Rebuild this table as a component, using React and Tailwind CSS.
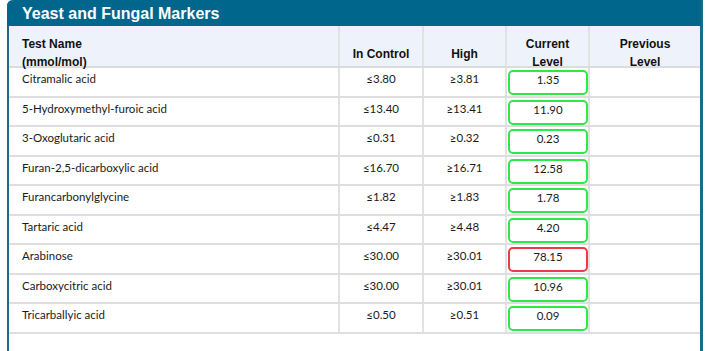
import React from "react";

const rows = [
  ["Citramalic acid", "≤3.80", "≥3.81", "1.35", false],
  ["5-Hydroxymethyl-furoic acid", "≤13.40", "≥13.41", "11.90", false],
  ["3-Oxoglutaric acid", "≤0.31", "≥0.32", "0.23", false],
  ["Furan-2,5-dicarboxylic acid", "≤16.70", "≥16.71", "12.58", false],
  ["Furancarbonylglycine", "≤1.82", "≥1.83", "1.78", false],
  ["Tartaric acid", "≤4.47", "≥4.48", "4.20", false],
  ["Arabinose", "≤30.00", "≥30.01", "78.15", true],
  ["Carboxycitric acid", "≤30.00", "≥30.01", "10.96", false],
  ["Tricarballyic acid", "≤0.50", "≥0.51", "0.09", false],
];

export default function App() {
  return (
    <div className="w-[707px] h-[351px] bg-white overflow-hidden">
      <div className="ml-[7px] w-[696px] h-[360px] border-l-2 border-r-[3px] border-[#1a6a8a] rounded-tl-[6px] flex flex-col">
        <div className="-ml-[2px] w-[694px] h-[26px] bg-[#00668b] rounded-tl-[6px] shrink-0 flex items-center pl-[15px] pt-[1px]">
          <span className="text-white font-bold text-[16px] leading-none font-['Liberation_Sans',Arial,sans-serif]">
            Yeast and Fungal Markers
          </span>
        </div>
        <div className="w-[691px] flex flex-col">
          <div className="h-[42px] bg-[#eef3fb] flex border-b-2 border-[#dcdcdc] font-['Liberation_Sans',Arial,sans-serif] font-bold text-[12px] leading-[18px] text-[#111]">
            <div className="w-[331px] border-r-2 border-[#e2e2e2] pl-[13px] pt-[9px]">
              <div>Test Name</div>
              <div>(mmol/mol)</div>
            </div>
            <div className="w-[84px] border-r-2 border-[#e2e2e2] flex items-center justify-center pt-[15px]">In Control</div>
            <div className="w-[83px] border-r-2 border-[#e2e2e2] flex items-center justify-center pt-[15px]">High</div>
            <div className="w-[83px] border-r-2 border-[#e2e2e2] text-center pt-[9px]">
              <div>Current</div>
              <div>Level</div>
            </div>
            <div className="w-[110px] text-center pt-[9px]">
              <div>Previous</div>
              <div>Level</div>
            </div>
          </div>
          {rows.map(([name, ctl, high, cur, bad], i) => (
            <div
              key={i}
              className="h-[29.5px] flex border-b-2 border-[#dedede] font-['Lato',sans-serif] text-[11.5px] leading-[16px] text-[#1a1a1a]"
            >
              <div className="w-[331px] border-r-2 border-[#e2e2e2] pl-[13px] pt-[3px]">{name}</div>
              <div className="w-[84px] border-r-2 border-[#e2e2e2] text-center pt-[3px]">{ctl}</div>
              <div className="w-[83px] border-r-2 border-[#e2e2e2] text-center pt-[3px]">{high}</div>
              <div className="w-[83px] border-r-2 border-[#e2e2e2] pt-[2px] pl-[1px]">
                <div
                  className={
                    bad
                      ? "w-[80px] h-[25px] border-2 border-[#ee3a45] rounded-[5px] text-center leading-[16px]"
                      : "w-[80px] h-[25px] border-2 border-[#2ee84a] rounded-[5px] text-center leading-[16px]"
                  }
                >
                  {cur}
                </div>
              </div>
              <div className="w-[110px]"></div>
            </div>
          ))}
        </div>
      </div>
    </div>
  );
}
